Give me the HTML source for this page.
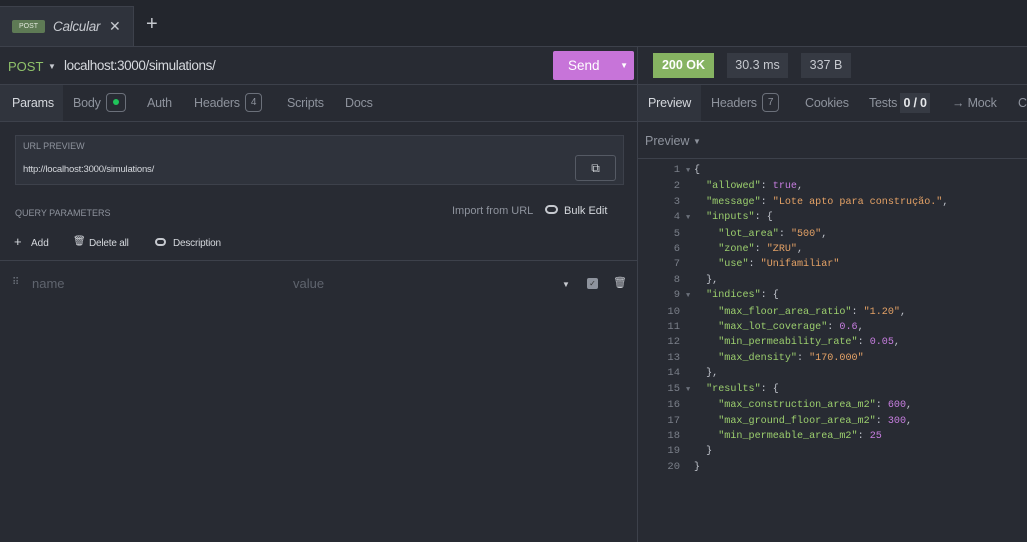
<!DOCTYPE html>
<html><head><meta charset="utf-8"><style>
*{box-sizing:border-box;margin:0;padding:0}
body{width:1027px;height:542px;overflow:hidden;background:#282b33;font-family:"Liberation Sans",sans-serif;color:#a9adb6;position:relative;font-size:13px}
.abs{position:absolute}
.hl{position:absolute;height:1px;background:#3d414b}
.vl{position:absolute;width:1px;background:#3d414b}
.tab{position:absolute;top:85px;height:36px;line-height:36px;font-size:12.5px;color:#8e939d;letter-spacing:-0.2px}
.badge{display:inline-block;border:1px solid #6b707a;border-radius:4px;height:19px;line-height:17px;padding:0 5px;font-size:10px;vertical-align:middle;margin-left:5px;position:relative;top:-1px}
.code{position:absolute;left:640px;top:163px;font-family:"Liberation Mono",monospace;font-size:10.1px;line-height:15.4px;white-space:pre;color:#c0c4cc}
.ln{display:inline-block;width:40px;text-align:right;color:#7a7f89;margin-right:6px;font-size:10.5px}
.ar{display:inline-block;width:8px;color:#6b707a;font-size:7px}
.k{color:#9ccf6e}.s{color:#e5a266}.p{color:#c77ee0}
</style></head><body>
<div class="abs" style="left:0;top:0;width:1027px;height:46px;background:#23262d"></div>
<div class="abs" style="left:0;top:6px;width:134px;height:40px;background:#2f333c;border-top:1px solid #3d414b;border-right:1px solid #3d414b"></div>
<div class="abs" style="left:12px;top:20px;width:33px;height:13px;background:#5e7a55;color:#dfe6da;font-size:7px;line-height:13px;text-align:center;border-radius:2px">POST</div>
<div class="abs" style="left:53px;top:19px;font-size:13.5px;font-style:italic;color:#c6c9cf;letter-spacing:-0.3px">Calcular</div>
<div class="abs" style="left:109px;top:18px;font-size:14px;color:#c6c9cf">✕</div>
<div class="abs" style="left:146px;top:13px;font-size:20px;color:#c6c9cf">+</div>
<div class="hl" style="left:0;top:46px;width:1027px"></div>
<div class="hl" style="left:0;top:84px;width:1027px"></div>
<div class="hl" style="left:0;top:121px;width:1027px"></div>
<div class="hl" style="left:637px;top:158px;width:390px"></div>
<div class="hl" style="left:0;top:260px;width:637px"></div>
<div class="vl" style="left:637px;top:46px;height:496px"></div>
<!-- url row -->
<div class="abs" style="left:8px;top:59px;font-size:13px;color:#8fc16a">POST</div>
<div class="abs" style="left:48px;top:62px;font-size:8px;color:#c6c9cf">▼</div>
<div class="abs" style="left:64px;top:58px;font-size:13.5px;color:#d5d8dd;letter-spacing:-0.4px">localhost:3000/simulations/</div>
<div class="abs" style="left:553px;top:51px;width:81px;height:29px;background:#c774d9;border-radius:2px;color:#fff;font-size:13.5px;line-height:29px"><span style="margin-left:15px">Send</span><span style="position:absolute;right:6px;font-size:8px">▼</span></div>
<!-- status -->
<div class="abs" style="left:653px;top:53px;width:61px;height:25px;background:#86b362;color:#fff;font-weight:bold;font-size:12.5px;line-height:25px;text-align:center">200 OK</div>
<div class="abs" style="left:727px;top:53px;width:61px;height:25px;background:#363a43;color:#c6c9cf;font-size:12.5px;line-height:25px;text-align:center">30.3 ms</div>
<div class="abs" style="left:801px;top:53px;width:50px;height:25px;background:#363a43;color:#c6c9cf;font-size:12.5px;line-height:25px;text-align:center">337 B</div>
<!-- left tabs -->
<div class="abs" style="left:0;top:85px;width:63px;height:36px;background:#30343d"></div>
<div class="tab" style="left:12px;color:#d5d8dd">Params</div>
<div class="tab" style="left:73px">Body<span class="badge" style="width:20px;padding:0"><span style="display:inline-block;width:6px;height:6px;border-radius:3px;background:#1fc45a;margin-left:6px;vertical-align:middle;position:relative;top:-1px"></span></span></div>
<div class="tab" style="left:147px">Auth</div>
<div class="tab" style="left:194px">Headers<span class="badge">4</span></div>
<div class="tab" style="left:287px">Scripts</div>
<div class="tab" style="left:345px">Docs</div>
<!-- right tabs -->
<div class="abs" style="left:638px;top:85px;width:63px;height:36px;background:#30343d"></div>
<div class="tab" style="left:648px;color:#d5d8dd">Preview</div>
<div class="tab" style="left:711px">Headers<span class="badge">7</span></div>
<div class="tab" style="left:805px">Cookies</div>
<div class="tab" style="left:869px">Tests <span style="background:#363a43;color:#e6e8eb;font-weight:bold;padding:3px 3px">0 / 0</span></div>
<div class="tab" style="left:952px">→ Mock</div>
<div class="tab" style="left:1018px">C</div>
<div class="abs" style="left:645px;top:134px;font-size:12.5px;color:#8e939d">Preview <span style="font-size:8px;position:relative;top:-1px">▼</span></div>
<!-- url preview -->
<div class="abs" style="left:15px;top:135px;width:609px;height:50px;background:#2f333c;border:1px solid #3d414b"></div>
<div class="abs" style="left:23px;top:141px;font-size:9px;color:#8e939d">URL PREVIEW</div>
<div class="abs" style="left:23px;top:164px;font-size:9.5px;color:#d5d8dd;letter-spacing:-0.2px">http://localhost:3000/simulations/</div>
<div class="abs" style="left:575px;top:155px;width:41px;height:26px;border:1px solid #555a64;border-radius:3px;color:#d5d8dd;font-size:12px;text-align:center;line-height:24px">⧉</div>
<div class="abs" style="left:15px;top:208px;font-size:9px;color:#8e939d">QUERY PARAMETERS</div>
<div class="abs" style="left:452px;top:205px;font-size:11px;color:#8e939d">Import from URL</div>
<div class="abs" style="left:545px;top:205px;width:13px;height:9px;border:2px solid #c6c9cf;border-radius:5px"></div>
<div class="abs" style="left:564px;top:205px;font-size:11px;color:#d5d8dd">Bulk Edit</div>
<div class="abs" style="left:14px;top:234px;font-size:13px;color:#d5d8dd">+</div>
<div class="abs" style="left:31px;top:238px;font-size:10px;color:#d5d8dd">Add</div>
<div class="abs" style="left:73px;top:236px;font-size:10px;color:#d5d8dd">🗑︎</div>
<div class="abs" style="left:89px;top:238px;font-size:10px;color:#d5d8dd;letter-spacing:-0.2px">Delete all</div>
<div class="abs" style="left:155px;top:238px;width:11px;height:8px;border:2px solid #c6c9cf;border-radius:4px"></div>
<div class="abs" style="left:173px;top:238px;font-size:10px;color:#d5d8dd;letter-spacing:-0.2px">Description</div>
<div class="abs" style="left:12px;top:277px;font-size:10px;color:#6b707a;letter-spacing:-1px">⠿</div>
<div class="abs" style="left:32px;top:276px;font-size:13px;color:#5f646e">name</div>
<div class="abs" style="left:293px;top:276px;font-size:13px;color:#5f646e">value</div>
<div class="abs" style="left:562px;top:280px;font-size:8px;color:#c6c9cf">▼</div>
<div class="abs" style="left:587px;top:278px;width:11px;height:11px;background:#8e939d;border-radius:2px;font-size:8px;color:#333;text-align:center;line-height:11px">✓</div>
<div class="abs" style="left:613px;top:276px;font-size:11px;color:#c6c9cf">🗑︎</div>
<div class="code"><span class="ln">1</span><span class="ar">▼</span>{
<span class="ln">2</span><span class="ar"></span>  <span class="k">"allowed"</span>: <span class="p">true</span>,
<span class="ln">3</span><span class="ar"></span>  <span class="k">"message"</span>: <span class="s">"Lote apto para construção."</span>,
<span class="ln">4</span><span class="ar">▼</span>  <span class="k">"inputs"</span>: {
<span class="ln">5</span><span class="ar"></span>    <span class="k">"lot_area"</span>: <span class="s">"500"</span>,
<span class="ln">6</span><span class="ar"></span>    <span class="k">"zone"</span>: <span class="s">"ZRU"</span>,
<span class="ln">7</span><span class="ar"></span>    <span class="k">"use"</span>: <span class="s">"Unifamiliar"</span>
<span class="ln">8</span><span class="ar"></span>  },
<span class="ln">9</span><span class="ar">▼</span>  <span class="k">"indices"</span>: {
<span class="ln">10</span><span class="ar"></span>    <span class="k">"max_floor_area_ratio"</span>: <span class="s">"1.20"</span>,
<span class="ln">11</span><span class="ar"></span>    <span class="k">"max_lot_coverage"</span>: <span class="p">0.6</span>,
<span class="ln">12</span><span class="ar"></span>    <span class="k">"min_permeability_rate"</span>: <span class="p">0.05</span>,
<span class="ln">13</span><span class="ar"></span>    <span class="k">"max_density"</span>: <span class="s">"170.000"</span>
<span class="ln">14</span><span class="ar"></span>  },
<span class="ln">15</span><span class="ar">▼</span>  <span class="k">"results"</span>: {
<span class="ln">16</span><span class="ar"></span>    <span class="k">"max_construction_area_m2"</span>: <span class="p">600</span>,
<span class="ln">17</span><span class="ar"></span>    <span class="k">"max_ground_floor_area_m2"</span>: <span class="p">300</span>,
<span class="ln">18</span><span class="ar"></span>    <span class="k">"min_permeable_area_m2"</span>: <span class="p">25</span>
<span class="ln">19</span><span class="ar"></span>  }
<span class="ln">20</span><span class="ar"></span>}</div>
</body></html>
